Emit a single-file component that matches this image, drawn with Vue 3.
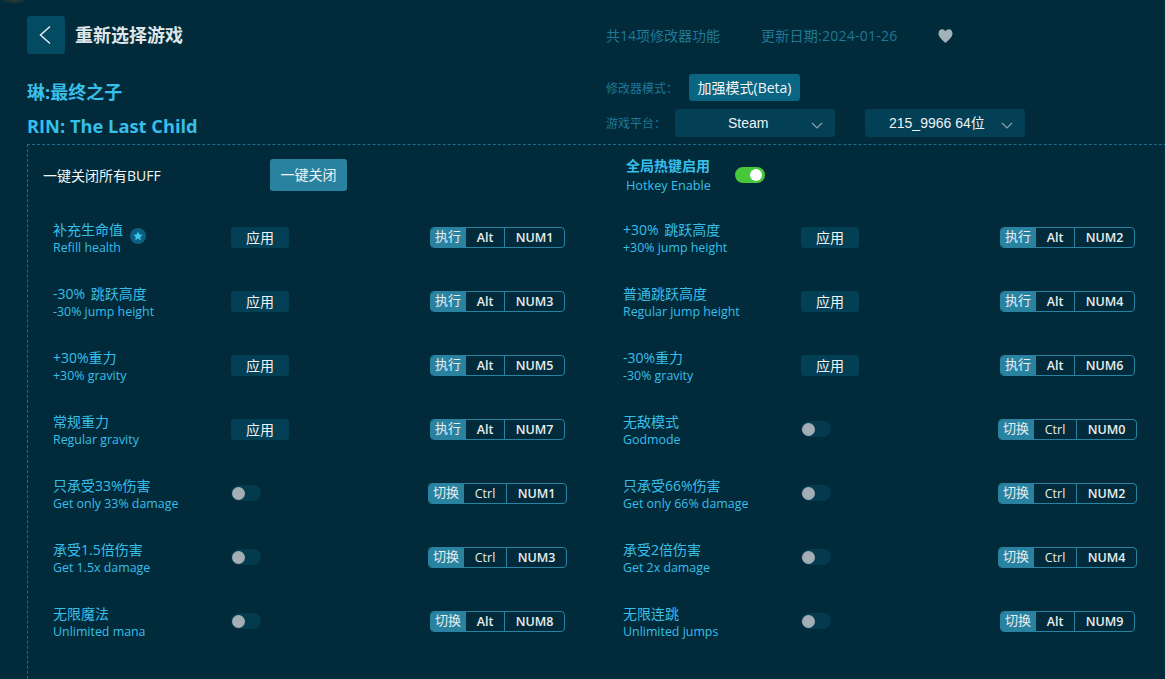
<script setup>
const left = [
  { zh: '补充生命值', en: 'Refill health', kind: 'apply', act: '执行', mod: 'Alt', key: 'NUM1', star: true },
  { zh: '-30% 跳跃高度', en: '-30% jump height', kind: 'apply', act: '执行', mod: 'Alt', key: 'NUM3' },
  { zh: '+30%重力', en: '+30% gravity', kind: 'apply', act: '执行', mod: 'Alt', key: 'NUM5' },
  { zh: '常规重力', en: 'Regular gravity', kind: 'apply', act: '执行', mod: 'Alt', key: 'NUM7' },
  { zh: '只承受33%伤害', en: 'Get only 33% damage', kind: 'toggle', act: '切换', mod: 'Ctrl', key: 'NUM1' },
  { zh: '承受1.5倍伤害', en: 'Get 1.5x damage', kind: 'toggle', act: '切换', mod: 'Ctrl', key: 'NUM3' },
  { zh: '无限魔法', en: 'Unlimited mana', kind: 'toggle', act: '切换', mod: 'Alt', key: 'NUM8' }
]
const right = [
  { zh: '+30% 跳跃高度', en: '+30% jump height', kind: 'apply', act: '执行', mod: 'Alt', key: 'NUM2' },
  { zh: '普通跳跃高度', en: 'Regular jump height', kind: 'apply', act: '执行', mod: 'Alt', key: 'NUM4' },
  { zh: '-30%重力', en: '-30% gravity', kind: 'apply', act: '执行', mod: 'Alt', key: 'NUM6' },
  { zh: '无敌模式', en: 'Godmode', kind: 'toggle', act: '切换', mod: 'Ctrl', key: 'NUM0' },
  { zh: '只承受66%伤害', en: 'Get only 66% damage', kind: 'toggle', act: '切换', mod: 'Ctrl', key: 'NUM2' },
  { zh: '承受2倍伤害', en: 'Get 2x damage', kind: 'toggle', act: '切换', mod: 'Ctrl', key: 'NUM4' },
  { zh: '无限连跳', en: 'Unlimited jumps', kind: 'toggle', act: '切换', mod: 'Alt', key: 'NUM9' }
]
const rows = left.flatMap((item, i) => [item, right[i]])
</script>

<template>
  <div class="page">
    <header class="top">
      <button class="back" aria-label="返回">
        <svg width="14" height="20" viewBox="0 0 14 20"><path d="M11 1.5 L1.5 10 L11 18.5" fill="none" stroke="#e4edf0" stroke-width="1.5"/></svg>
      </button>
      <h1 class="back-title">重新选择游戏</h1>
      <div class="stats">
        <span class="stat-count">共14项修改器功能</span>
        <span class="stat-date">更新日期:2024-01-26</span>
        <svg class="heart" width="15" height="14" viewBox="0 0 15 14"><path d="M7.5 14 C5 11.5 0.5 8.5 0.5 4.5 C0.5 1.8 2.3 0.3 4.2 0.3 C5.6 0.3 6.8 1 7.5 2.3 C8.2 1 9.4 0.3 10.8 0.3 C12.7 0.3 14.5 1.8 14.5 4.5 C14.5 8.5 10 11.5 7.5 14 Z" fill="#a3b1b9"/></svg>
      </div>
    </header>

    <section class="meta">
      <div class="game">
        <div class="game-zh">琳:最终之子</div>
        <div class="game-en">RIN: The Last Child</div>
      </div>
      <div class="options">
        <div class="opt-row mode-row">
          <span class="opt-label">修改器模式：</span>
          <span class="mode">加强模式(Beta)</span>
        </div>
        <div class="opt-row">
          <span class="opt-label platform-label">游戏平台：</span>
          <div class="select steam">
            <span>Steam</span>
            <svg class="caret" width="12" height="7" viewBox="0 0 12 7"><path d="M1 1 L6 6 L11 1" fill="none" stroke="#8fa3ad" stroke-width="1.2"/></svg>
          </div>
          <div class="select version">
            <span>215_9966 64位</span>
            <svg class="caret" width="12" height="7" viewBox="0 0 12 7"><path d="M1 1 L6 6 L11 1" fill="none" stroke="#8fa3ad" stroke-width="1.2"/></svg>
          </div>
        </div>
      </div>
    </section>

    <section class="panel">
      <div class="global">
        <div class="close-all">
          <span class="close-label">一键关闭所有BUFF</span>
          <button class="close-btn">一键关闭</button>
        </div>
        <div class="hotkey-enable">
          <div class="he-text">
            <div class="he-zh">全局热键启用</div>
            <div class="he-en">Hotkey Enable</div>
          </div>
          <span class="switch-on"><i></i></span>
        </div>
      </div>
      <div class="grid">
        <div v-for="(r, i) in rows" :key="i" class="item">
          <div class="names">
            <div class="zh">{{ r.zh }}<svg v-if="r.star" class="star" width="16" height="16" viewBox="0 0 16 16"><circle cx="8" cy="8" r="8" fill="#0d5f80"/><path d="M8 3.4 L9.4 6.4 L12.6 6.8 L10.2 9 L10.9 12.2 L8 10.6 L5.1 12.2 L5.8 9 L3.4 6.8 L6.6 6.4 Z" fill="#3cc6f2"/></svg></div>
            <div class="en">{{ r.en }}</div>
          </div>
          <div class="control">
            <button v-if="r.kind === 'apply'" class="apply">应用</button>
            <span v-else class="switch-off"><i></i></span>
          </div>
          <div class="keys-cell">
            <div class="keys">
              <span class="act">{{ r.act }}</span>
              <span class="mod" :class="{ ctrl: r.mod === 'Ctrl' }">{{ r.mod }}</span>
              <span class="key">{{ r.key }}</span>
            </div>
          </div>
        </div>
      </div>
    </section>
  </div>
</template>

<style>
html, body { margin: 0; background: #012b3a; }
</style>

<style scoped>
* { box-sizing: border-box; }
.page {
  width: 1165px;
  height: 679px;
  overflow: hidden;
  background: radial-gradient(ellipse 14px 4px at 14px 0, rgba(120, 90, 40, 0.4), transparent), #012b3a;
  padding: 16px 0 0 27px;
  font-family: "Open Sans", "Noto Sans CJK SC", sans-serif;
  color: #fff;
}
button { border: 0; padding: 0; font-family: inherit; color: inherit; }
.top { display: flex; align-items: center; height: 38px; }
.back {
  width: 38px; height: 38px; border-radius: 3px; background: #034b63;
  display: flex; align-items: center; justify-content: center;
}
.back-title { margin: 0 0 0 10px; width: 531px; font-size: 18px; font-weight: 700; color: #dfe6e9; line-height: 38px; }
.stats { display: flex; align-items: center; font-size: 14px; color: #1f7896; }
.stat-count { width: 155px; }
.stat-date { width: 177px; letter-spacing: 0.25px; }
.heart { display: block; margin-top: 2px; }
.meta { display: flex; height: 90px; }
.game { width: 579px; font-weight: 700; font-size: 18px; color: #38bfe9; }
.game-zh { margin-top: 25px; line-height: 26px; }
.game-en { margin-top: 8px; line-height: 26px; font-size: 18.3px; }
.options { padding-top: 20px; }
.opt-row { display: flex; align-items: center; }
.mode-row { height: 27px; margin-bottom: 8px; }
.opt-label { font-size: 12px; color: #1f7896; width: 83px; }
.platform-label { width: 69px; }
.mode {
  height: 27px; line-height: 27px; padding: 0 8.5px; border-radius: 3px;
  background: #0a6583; font-size: 14px; color: #f2f6f7; white-space: nowrap;
}
.select {
  position: relative; height: 28px; width: 160px; border-radius: 3px; background: #033f55;
  font-family: "Liberation Sans", "Noto Sans CJK SC", sans-serif;
  font-size: 14px; color: #eef3f5; line-height: 28px;
}
.steam { padding-left: 53px; }
.version { margin-left: 30px; padding-left: 24px; }
.caret { position: absolute; right: 12px; top: 13px; }
.panel {
  border-top: 1px dashed #1a7089;
  border-left: 1px dashed #1a7089;
  width: 1200px;
  height: 600px;
}
.global { display: flex; height: 60px; padding-top: 14px; }
.close-all { display: flex; align-items: center; width: 598px; height: 32px; padding-left: 15px; }
.close-label { width: 227px; font-size: 14px; color: #f2f6f7; white-space: nowrap; }
.close-btn { width: 77px; height: 32px; padding-bottom: 3px; border-radius: 3px; background: #2a82a1; font-size: 14px; color: #eef3f5; }
.hotkey-enable { display: flex; align-items: center; height: 32px; }
.he-text { width: 109px; }
.he-zh { font-size: 14px; font-weight: 700; color: #38bfe9; line-height: 18px; }
.he-en { font-size: 12.7px; color: #38bfe9; line-height: 18px; padding-top: 1px; }
.switch-on {
  position: relative; display: block; width: 30px; height: 16px; border-radius: 8px; background: #46c83a;
}
.switch-on i {
  position: absolute; right: 3px; top: 2px; width: 12px; height: 12px; border-radius: 50%; background: #fff;
}
.grid { display: grid; grid-template-columns: 570px 570px; grid-auto-rows: 64px; padding-left: 25px; }
.item { display: grid; grid-template-columns: 178px 150px 233px; align-items: center; }
.names { padding-top: 4px; }
.zh { display: flex; align-items: center; font-size: 14px; line-height: 18px; color: #38bfe9; word-spacing: 2px; white-space: pre; }
.en { font-size: 12.4px; line-height: 18px; color: #38bfe9; }
.star { margin-left: 7px; margin-top: 6px; margin-bottom: -6px; }
.apply {
  display: block; width: 58px; height: 21px; padding-bottom: 3px; border-radius: 3px; background: #033f55;
  font-size: 14px; color: #f0f4f6;
}
.switch-off {
  position: relative; display: block; width: 30px; height: 16px; border-radius: 8px; background: #033a4e;
}
.switch-off i {
  position: absolute; left: 1px; top: 1.5px; width: 13px; height: 13px; border-radius: 50%; background: #a3adb3;
}
.keys-cell { display: flex; justify-content: center; }
.keys {
  display: flex; height: 21px; border: 1px solid #2a82a1; border-radius: 4px; overflow: hidden;
  font-size: 12.5px; line-height: 19px; color: #e6eef1; font-weight: 600;
}
.keys span { display: block; text-align: center; }
.act { width: 36px; background: #2a82a1; font-size: 13px; font-weight: 400; margin: -1px 0 -1px -1px; line-height: 19px; }
.mod { width: 39px; border-right: 1px solid #2a82a1; }
.ctrl { width: 43px; font-weight: 400; }
.key { width: 59px; }
</style>
